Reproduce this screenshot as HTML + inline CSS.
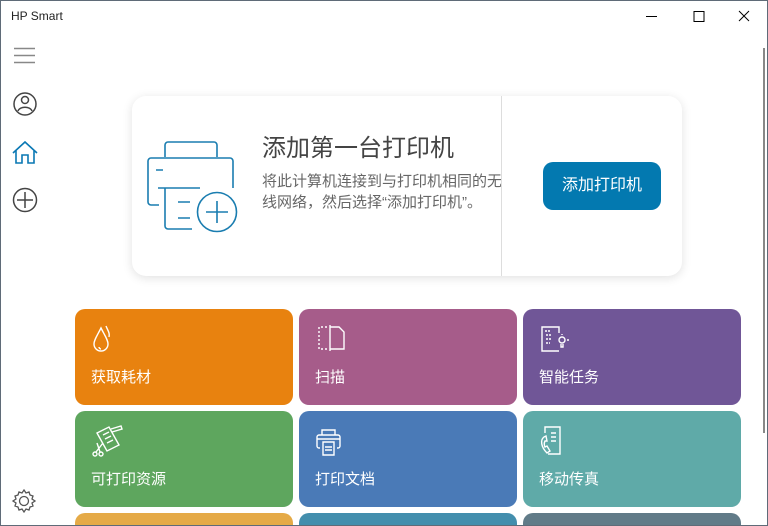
<!DOCTYPE html>
<html style="overflow:hidden"><head><meta charset="utf-8"><style>
*{margin:0;padding:0;box-sizing:border-box}
html,body{width:768px;height:526px;overflow:hidden}
body{background:#fff;font-family:"Liberation Sans","Noto Sans CJK SC",sans-serif;position:relative}
.frame{position:absolute;left:0;top:0;width:768px;height:526px;border:1px solid #5f6b78;pointer-events:none;z-index:10}
.title{position:absolute;left:11px;top:9px;font-size:12px;color:#222}
.abs{position:absolute}
.card{position:absolute;left:132px;top:96px;width:550px;height:180px;background:#fff;border-radius:14px;box-shadow:0 2px 10px rgba(0,0,0,.12)}
.div{position:absolute;left:369px;top:0;width:1px;height:180px;background:#ddd}
.h{position:absolute;left:130px;top:32px;font-size:24px;color:#444}
.p{position:absolute;left:130px;top:75px;width:243px;font-size:15px;line-height:21px;color:#666}
.btn{position:absolute;left:411px;top:66px;width:118px;height:48px;background:#0379b0;border-radius:10px;color:#fff;font-size:16px;text-align:center;line-height:48px}
.t{position:absolute;width:218px;height:96px;border-radius:10px;color:#fff;font-size:15px}
.t span{position:absolute;left:16px;top:57px}
.t svg{position:absolute;left:16px;top:14px}
</style></head><body>
<div class="frame"></div>
<div class="title">HP Smart</div>
<svg class="abs" style="left:640px;top:8px" width="120" height="16"><path d="M6 8.5h11" stroke="#000"/><path d="M54 3.5h10v10h-10z" stroke="#000" fill="none"/><path d="M99 3l10 10M109 3l-10 10" stroke="#000"/></svg>
<div class="abs" style="left:763px;top:48px;width:2px;height:385px;background:#888"></div>
<svg class="abs" style="left:12px;top:44px" width="28" height="200">
<path d="M2 4.5h21M2 11.5h21M2 18.5h21" stroke="#888" stroke-width="1.5"/>
<circle cx="13" cy="60" r="11" stroke="#444" stroke-width="1.5" fill="none"/><circle cx="13" cy="56" r="3.5" stroke="#444" stroke-width="1.5" fill="none"/><path d="M6 67c2-5 12-5 14 0" stroke="#444" stroke-width="1.5" fill="none"/>
<path d="M1 109l12-11 12 11M4 106v13h6v-8h6v8h6v-13" stroke="#0a78b4" stroke-width="1.6" fill="none"/>
<circle cx="13" cy="156" r="11.5" stroke="#444" stroke-width="1.5" fill="none"/><path d="M13 148v16M5 156h16" stroke="#444" stroke-width="1.5"/>
</svg>
<svg class="abs" style="left:11px;top:488px" width="28" height="28"><path d="M13 2l2 3 3-1 1 3 3 1-1 3 3 2-3 2 1 3-3 1-1 3-3-1-2 3-2-3-3 1-1-3-3-1 1-3-3-2 3-2-1-3 3-1 1-3 3 1z" stroke="#555" stroke-width="1.3" fill="none"/><circle cx="13" cy="13" r="4.5" stroke="#555" stroke-width="1.3" fill="none"/></svg>
<div class="card">
<svg class="abs" style="left:0;top:0" width="120" height="150"><g stroke="#1a7db0" stroke-width="1.6" fill="none">
<path d="M33 61v-12a3 3 0 0 1 3-3h46a3 3 0 0 1 3 3v12"/>
<path d="M27 109h-8a3 3 0 0 1-3-3v-41a3 3 0 0 1 3-3h79a3 3 0 0 1 3 3v27"/>
<path d="M24 74h7M26 92h42"/>
<path d="M33 92v38a3 3 0 0 0 3 3h24"/>
<path d="M46 106h12M46 122h12"/>
<circle cx="85" cy="116" r="19.5"/><path d="M85 105v22M74 116h22"/></g></svg>
<div class="h">添加第一台打印机</div>
<div class="p">将此计算机连接到与打印机相同的无线网络，然后选择“添加打印机”。</div>
<div class="div"></div>
<div class="btn">添加打印机</div>
</div>
<div class="t" style="left:75px;top:309px;background:#e8820f"><svg width="30" height="32"><g stroke="#fff" stroke-width="1.4" fill="none"><path d="M10 5c-4 8-7 12-7 16a7 7 0 0 0 14 0c0-4-3-8-7-16z"/><path d="M15 3c2 5 4 7 3 11"/><path d="M8 24c0 1 1 2 2 2"/></g></svg><span>获取耗材</span></div>
<div class="t" style="left:299px;top:309px;background:#a65c8a"><svg width="34" height="32"><g stroke="#fff" stroke-width="1.4" fill="none"><path d="M12 4h-8v22h8" stroke-dasharray="2 2"/><path d="M15 2v26M15 4h9l5 5v17h-14"/></g></svg><span>扫描</span></div>
<div class="t" style="left:523px;top:309px;background:#705697"><svg width="34" height="32"><g stroke="#fff" stroke-width="1.4" fill="none"><path d="M20 10v-6h-17v24h17"/><path d="M6 8h6M7 12h5M7 16h5M7 20h4" stroke-dasharray="2 1"/><circle cx="23" cy="17" r="3"/><path d="M22 21v3h2v-3M28 17h2M23 11v1"/></g></svg><span>智能任务</span></div>
<div class="t" style="left:75px;top:411px;background:#5ea65e"><svg width="34" height="34"><g stroke="#fff" stroke-width="1.4" fill="none"><path d="M6 8l12-6 10 18-12 6z"/><path d="M12 10l6-3M14 14l6-3M16 18l6-3"/><path d="M20 4l10-3 1 3-10 3"/><circle cx="4" cy="29" r="2"/><circle cx="10" cy="29" r="2"/><path d="M5 27l7-9M9 27l-3-9"/></g></svg><span>可打印资源</span></div>
<div class="t" style="left:299px;top:411px;background:#4a7ab7"><svg width="34" height="34"><g stroke="#fff" stroke-width="1.4" fill="none"><path d="M7 10v-5h13v5"/><path d="M5 23h-1a2 2 0 0 1-2-2v-9a2 2 0 0 1 2-2h19a2 2 0 0 1 2 2v9a2 2 0 0 1-2 2h-1"/><path d="M8 17h11v13h-11zM10 22h7M10 25h7"/><path d="M2 14h23"/></g></svg><span>打印文档</span></div>
<div class="t" style="left:523px;top:411px;background:#5faaa8"><svg width="34" height="34"><g stroke="#fff" stroke-width="1.4" fill="none"><path d="M6 8v-6h15v27h-12"/><path d="M12 8h5M12 12h5M12 16h5"/><path d="M5 12c-4 3-3 10 3 16l3-2-3-5-2 1c-1-2-1-4 0-6l2 0-1-5z"/></g></svg><span>移动传真</span></div>
<div class="t" style="left:75px;top:513px;height:13px;border-radius:10px 10px 0 0;background:#e5aa47"></div>
<div class="t" style="left:299px;top:513px;height:13px;border-radius:10px 10px 0 0;background:#438ead"></div>
<div class="t" style="left:523px;top:513px;height:13px;border-radius:10px 10px 0 0;background:#617b88"></div>
</body></html>
